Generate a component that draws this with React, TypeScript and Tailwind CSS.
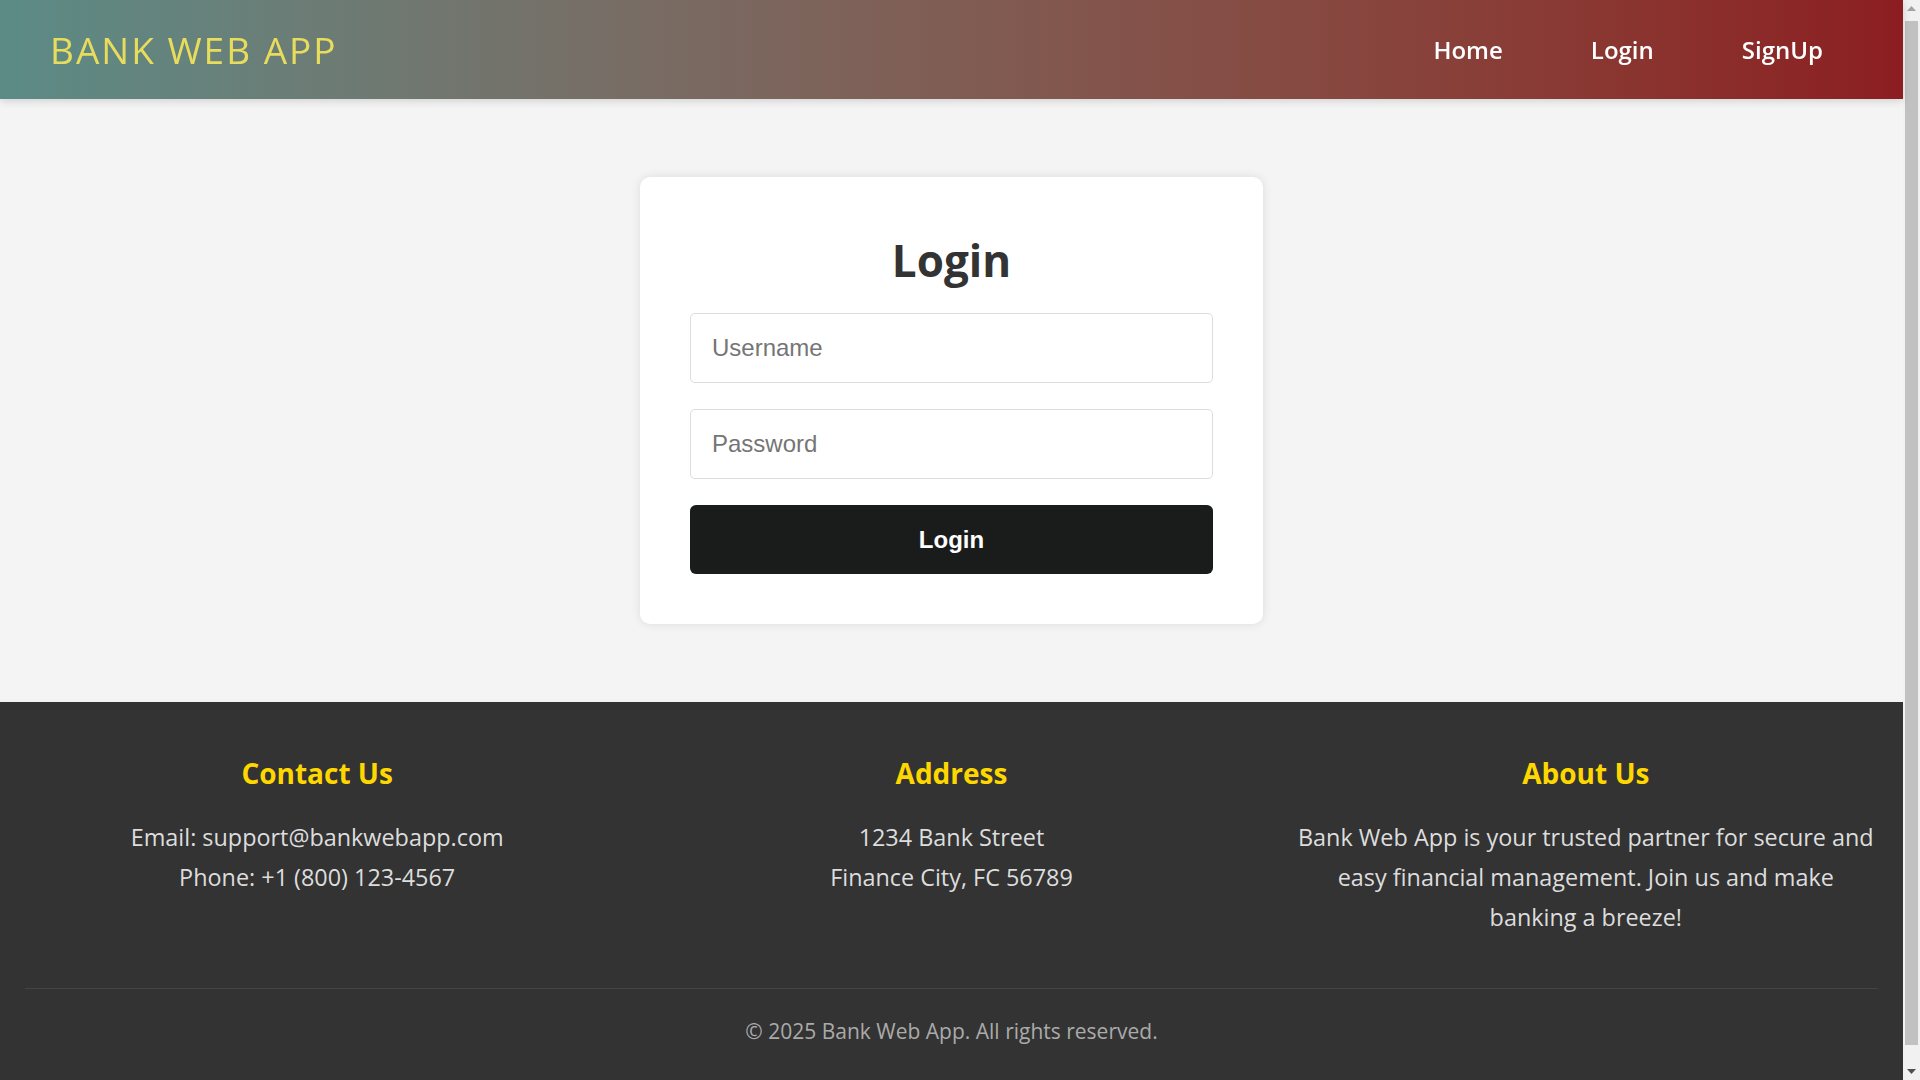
import React from "react";

const sans = "font-['Open_Sans',_'Noto_Sans',_sans-serif]";
const arial = "font-['Liberation_Sans',_Arial,_sans-serif]";

export default function App() {
  return (
    <div className="relative">
      <div className={`w-[1903px] min-h-screen flex flex-col bg-[#f4f4f4] ${sans}`}>
        {/* Header */}
        <header className="h-[99px] flex items-center justify-between pl-[50px] pr-[80px] bg-gradient-to-r from-[#5b8b86] to-[#8c1d20] shadow-[0_2px_8px_rgba(0,0,0,0.15)] relative z-10">
          <div className="text-[37px] tracking-[2px] text-[#e8dc5c] leading-none">BANK WEB APP</div>
          <nav className="flex items-center gap-[88px] text-[24px] font-semibold text-white">
            <a href="#">Home</a>
            <a href="#">Login</a>
            <a href="#">SignUp</a>
          </nav>
        </header>

        {/* Main */}
        <main className="flex justify-center py-[78px]">
          <div className="w-[623px] bg-white rounded-[10px] shadow-[0_0_10px_rgba(0,0,0,0.1)] px-[50px] pt-[55px] pb-[50px]">
            <h1 className="text-center text-[44px] leading-[56px] font-bold text-[#333] mb-[25px]">Login</h1>
            <div className="flex flex-col gap-[26px]">
              <input
                type="text"
                placeholder="Username"
                className={`h-[70px] w-full border border-[#ddd] rounded-[5px] px-[21px] text-[24px] outline-none placeholder:text-[#757575] ${arial}`}
              />
              <input
                type="password"
                placeholder="Password"
                className={`h-[70px] w-full border border-[#ddd] rounded-[5px] px-[21px] text-[24px] outline-none placeholder:text-[#757575] ${arial}`}
              />
              <button
                className={`h-[69px] w-full bg-[#1a1c1b] rounded-[6px] text-white text-[24px] font-bold ${arial}`}
              >
                Login
              </button>
            </div>
          </div>
        </main>

        {/* Footer */}
        <footer className="bg-[#333] pt-[52px] pb-[60px]">
          <div className="grid grid-cols-3">
            <FooterCol title="Contact Us">
              Email: support@bankwebapp.com
              <br />
              Phone: +1 (800) 123-4567
            </FooterCol>
            <FooterCol title="Address">
              1234 Bank Street
              <br />
              Finance City, FC 56789
            </FooterCol>
            <FooterCol title="About Us">
              Bank Web App is your trusted partner for secure and easy financial management. Join us and make banking a breeze!
            </FooterCol>
          </div>
          <div className="mx-[25px] mt-[51px] border-t border-[#444] pt-[27px] text-center text-[21px] leading-[30px] text-[#aaa]">
            © 2025 Bank Web App. All rights reserved.
          </div>
        </footer>
      </div>

      {/* classic window scrollbar */}
      <div className="fixed top-0 right-0 w-[17px] h-screen bg-[#f1f1f1] flex flex-col items-center">
        <div className="h-[17px] flex items-center justify-center">
          <svg width="9" height="5" viewBox="0 0 9 5"><path d="M0 5 L4.5 0 L9 5 Z" fill="#a3a3a3" /></svg>
        </div>
        <div className="w-[13px] flex-1 bg-[#c1c1c1] mt-[4px] mb-[18px]" />
        <div className="h-[17px] flex items-center justify-center">
          <svg width="9" height="5" viewBox="0 0 9 5"><path d="M0 0 L4.5 5 L9 0 Z" fill="#505050" /></svg>
        </div>
      </div>
    </div>
  );
}

function FooterCol({ title, children }: { title: string; children: React.ReactNode }) {
  return (
    <div className="px-[25px] text-center">
      <h3 className="text-[28px] leading-[38px] font-bold text-[#ffd700] mb-[25px]">{title}</h3>
      <p className="text-[23.4px] leading-[40px] text-[#ddd]">{children}</p>
    </div>
  );
}
